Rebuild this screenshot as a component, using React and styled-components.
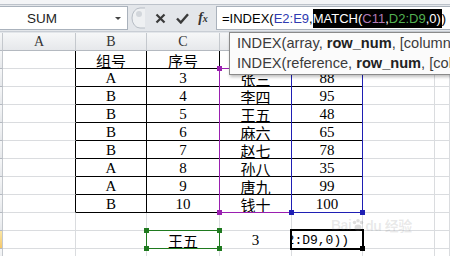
import React from 'react'
import styled, { createGlobalStyle } from 'styled-components'

const Global = createGlobalStyle`
  html, body { margin: 0; padding: 0; background: #fff; }
  body { overflow: hidden; }
`

const CELL_FONT = `"Liberation Serif", "Noto Sans CJK SC", serif`
const UI_FONT = `"Liberation Sans", "Noto Sans CJK SC", sans-serif`

// left edges of each grid column (row header, A..G)
const LEFTS = [0, 3, 76, 147, 220, 292, 363, 435, 450]
const ROW_H = 18

const Page = styled.div`
  width: 450px;
  height: 256px;
  overflow: hidden;
  position: relative;
  background: #fff;
`

const TopStrip = styled.div`
  height: 4px;
  background: #f3f4f6;
  border-bottom: 1px solid #bcc2ca;
`

const FormulaBar = styled.div`
  height: 26px;
  display: flex;
  align-items: center;
  background: #e3e6ea;
  border-bottom: 1px solid #c9ced5;
`

const NameBox = styled.div`
  width: 128px;
  height: 24px;
  box-sizing: border-box;
  background: #fff;
  border: 1px solid #aab2bc;
  border-left: none;
  display: flex;
  align-items: center;
  justify-content: space-between;
  padding: 0 6px 0 27px;
  font: 13.5px ${UI_FONT};
  color: #1e1e1e;
`

const Arrow = styled.span`
  width: 0;
  height: 0;
  border-left: 3px solid transparent;
  border-right: 3px solid transparent;
  border-top: 3px solid #444;
  margin-top: 1px;
`

const Controls = styled.div`
  width: 88px;
  height: 24px;
  display: flex;
  align-items: center;
`

const Btn = styled.div`
  width: ${p => p.$w || 20}px;
  height: 24px;
  display: flex;
  align-items: center;
  justify-content: center;
  color: #3c3c3c;
`

const Fx = styled.span`
  font: italic bold 14px "Liberation Serif", serif;
  color: #333;
  & small { font-size: 10px; }
`

const Input = styled.div`
  flex: 1;
  height: 24px;
  box-sizing: border-box;
  background: #fff;
  border: 1px solid #aab2bc;
  border-right: none;
  display: flex;
  align-items: center;
  padding-left: 5px;
  font: 13px ${UI_FONT};
  white-space: nowrap;
  overflow: hidden;
  color: #000;
`

const Ref = styled.span`
  color: ${p => p.$c};
`

const Hi = styled.span`
  background: #000;
  color: #fff;
  line-height: 19px;
  padding-right: 1px;
`

const Gap = styled.div`
  height: 1px;
  background: #e3e6ea;
`

const SheetWrap = styled.div`
  position: relative;
  height: 223px;
`

const Grid = styled.div`
  display: grid;
  grid-template-columns: 3px 73px 71px 73px 72px 71px 72px 15px;
  grid-auto-rows: ${ROW_H}px;
`

const Head = styled.div`
  box-sizing: border-box;
  background: ${p => (p.$on ? 'linear-gradient(#fbe7a6, #f5c86a)' : 'linear-gradient(#f6f7f8, #e6e8eb)')};
  border-right: 1px solid #c4c8cd;
  border-bottom: 1px solid #b4b9c0;
  display: flex;
  align-items: center;
  justify-content: center;
  font: 14px ${CELL_FONT};
  color: #333;
`

const Cell = styled.div`
  box-sizing: border-box;
  border-right: 1px solid ${p => p.$r || '#dadcdf'};
  border-bottom: 1px solid ${p => p.$b || '#dadcdf'};
  display: flex;
  align-items: center;
  justify-content: ${p => (p.$edit ? 'flex-end' : 'center')};
  padding-right: ${p => (p.$edit ? 13 : 0)}px;
  font: ${p => (p.$edit ? `13px "Liberation Mono", monospace` : `15px ${CELL_FONT}`)};
  color: #000;
  white-space: nowrap;
  overflow: hidden;
  padding-top: 1px;
`

const Range = styled.div`
  position: absolute;
  box-sizing: border-box;
  border: ${p => p.$t || 1}px solid ${p => p.$c};
`

const Handle = styled.div`
  position: absolute;
  width: 5px;
  height: 5px;
  background: ${p => p.$c};
`

const Tip = styled.div`
  position: absolute;
  left: 229px;
  top: -1px;
  width: 240px;
  box-sizing: border-box;
  background: #fbfbfb;
  border: 1px solid #8a8a8a;
  box-shadow: 1px 2px 3px rgba(0, 0, 0, 0.25);
  padding: 0 0 1px 7px;
  font: 14.6px ${UI_FONT};
  color: #3b3b3b;
  line-height: 20px;
  white-space: nowrap;
  & b { color: #222; }
`

const Watermark = styled.div`
  position: absolute;
  left: 331px;
  top: 182px;
  display: flex;
  align-items: center;
  font: bold 14px ${UI_FONT};
  color: rgba(120, 120, 120, 0.16);
  letter-spacing: -0.5px;
`

const tableB = ['组号', 'A', 'B', 'B', 'B', 'B', 'A', 'A', 'B']
const tableC = ['序号', '3', '4', '5', '6', '7', '8', '9', '10']
const tableD = ['', '张三', '李四', '王五', '麻六', '赵七', '孙八', '唐九', '钱十']
const tableE = ['', '88', '95', '48', '65', '78', '35', '99', '100']

function box(c1, c2, r1, r2) {
  return {
    left: LEFTS[c1] - 1,
    top: ROW_H * r1 - 1,
    width: LEFTS[c2 + 1] - LEFTS[c1] + 1,
    height: ROW_H * (r2 - r1 + 1) + 1,
  }
}

function Corners({ c1, c2, r1, r2, color, skip = [] }) {
  const b = box(c1, c2, r1, r2)
  const pts = [
    ['tl', b.left, b.top],
    ['tr', b.left + b.width - 1, b.top],
    ['bl', b.left, b.top + b.height - 1],
    ['br', b.left + b.width - 1, b.top + b.height - 1],
  ]
  return pts
    .filter(p => !skip.includes(p[0]))
    .map(([k, x, y]) => <Handle key={k} $c={color} style={{ left: x - 2, top: y - 2 }} />)
}

function Row({ r }) {
  const inTable = r >= 1 && r <= 9
  const black = inTable ? '#000' : undefined
  let b = '', c = '', d = '', e = null
  if (inTable) {
    b = tableB[r - 1]
    c = tableC[r - 1]
    d = tableD[r - 1]
    e = tableE[r - 1]
  }
  if (r === 11) {
    c = '王五'
    d = '3'
    e = '2:D9,0))'
  }
  return (
    <>
      <Head $on={r === 11} />
      <Cell $r={black} />
      <Cell $r={black} $b={black}>{b}</Cell>
      <Cell $r={black} $b={black}>{c}</Cell>
      <Cell $r={black} $b={black}>{d}</Cell>
      <Cell $r={black} $b={black} $edit={r === 11}>{e}</Cell>
      <Cell />
      <Cell />
    </>
  )
}

export default function App() {
  const rows = Array.from({ length: 12 }, (_, i) => i + 1)
  const purple = '#9a1fb0'
  const blue = '#1f1fb4'
  const green = '#1f7a1f'
  return (
    <Page>
      <Global />
      <TopStrip />
      <FormulaBar>
        <NameBox>
          SUM
          <Arrow />
        </NameBox>
        <Controls>
          <Btn $w={20}>
            <svg width="14" height="22" viewBox="0 0 14 22">
              <path d="M14 1 H9 A8 10 0 0 0 9 21 H14" fill="#eef0f2" stroke="#b7bdc5" />
              <circle cx="8" cy="7" r="3" fill="#d2d6db" />
            </svg>
          </Btn>
          <Btn $w={24}>
            <svg width="11" height="11" viewBox="0 0 11 11">
              <path d="M1.5 1.5 L9.5 9.5 M9.5 1.5 L1.5 9.5" stroke="#3a3a3a" strokeWidth="2.2" />
            </svg>
          </Btn>
          <Btn $w={20}>
            <svg width="13" height="11" viewBox="0 0 13 11">
              <path d="M1 5.5 L4.8 9.5 L12 1.2" stroke="#3a3a3a" strokeWidth="2.4" fill="none" />
            </svg>
          </Btn>
          <Btn $w={22}>
            <Fx>f<small>x</small></Fx>
          </Btn>
        </Controls>
        <Input>
          =INDEX(<Ref $c="#2f3ab0">E2:E9</Ref>,
          <Hi>
            MATCH(<Ref $c="#b27ab6">C11</Ref>,<Ref $c="#52b052">D2:D9</Ref>,0)
          </Hi>
          )
        </Input>
      </FormulaBar>
      <Gap />
      <SheetWrap>
        <Grid>
          <Head />
          <Head>A</Head>
          <Head>B</Head>
          <Head>C</Head>
          <Head>D</Head>
          <Head>E</Head>
          <Head>F</Head>
          <Head>G</Head>
          {rows.map(r => (
            <Row key={r} r={r} />
          ))}
        </Grid>

        <Range $c={purple} style={box(4, 4, 2, 9)} />
        <Corners c1={4} c2={4} r1={2} r2={9} color={purple} skip={['br']} />
        <Range $c={blue} style={box(5, 5, 2, 9)} />
        <Corners c1={5} c2={5} r1={2} r2={9} color={blue} />
        <Range $c={green} style={box(3, 3, 11, 11)} />
        <Corners c1={3} c2={3} r1={11} r2={11} color={green} />
        <Range $c="#000" $t={2} style={{ left: 290, top: 196, width: 74, height: 21 }} />
        <Handle $c="#000" style={{ left: 360, top: 213 }} />

        <Watermark>
          Bai
          <svg width="14" height="14" viewBox="0 0 16 16">
            <g fill="rgba(120,120,120,0.25)">
              <circle cx="4" cy="5" r="2" />
              <circle cx="8" cy="3" r="2" />
              <circle cx="12" cy="5" r="2" />
              <ellipse cx="8" cy="11" rx="4" ry="3.5" />
            </g>
          </svg>
          du 经验
        </Watermark>

        <Tip>
          <div>
            INDEX(array, <b>row_num</b>, [column_num])
          </div>
          <div>
            INDEX(reference, <b>row_num</b>, [column_num], [area_num])
          </div>
        </Tip>
      </SheetWrap>
    </Page>
  )
}
